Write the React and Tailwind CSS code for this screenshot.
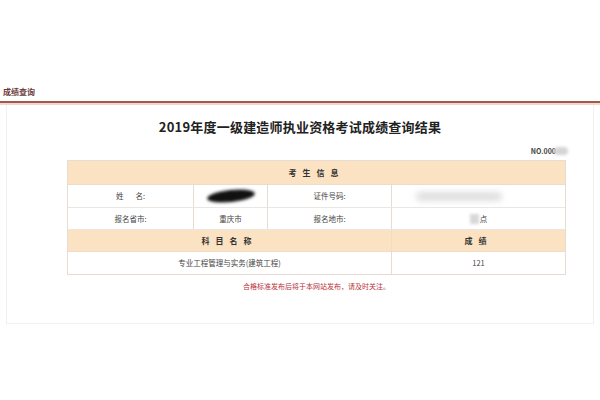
import React from 'react';

const cjk = { fontFamily: '"Noto Sans CJK SC", "Noto Sans", sans-serif' };

const Cell = ({ className = '', children }) => (
  <div className={`flex items-center justify-center border-r border-[#e6dcd2] last:border-r-0 ${className}`}>
    {children}
  </div>
);

export default function App() {
  return (
    <div className="w-[600px] h-[400px] bg-white overflow-hidden text-[#444]" style={cjk}>
      {/* top bar */}
      <div className="h-[82px]" />
      <div className="px-[3px] h-[19px] flex items-center text-[8px] font-bold text-[#6b3a3a]">成绩查询</div>
      <div className="h-[2px] bg-[#a3584e]" />
      <div className="h-[2px] bg-[#f1d6cf]" />

      {/* content box */}
      <div className="mx-[6px] border border-t-0 border-[#f3f1f0] pb-[26px]">
        <div className="h-[31px] flex items-end justify-center">
          <h1 className="text-[13px] font-bold text-[#222] tracking-[0.2px]">2019年度一级建造师执业资格考试成绩查询结果</h1>
        </div>

        <div className="ml-[60px] w-[499px]">
          <div className="h-[24px] flex items-end justify-end pb-[4px]">
            <span className="relative text-[7px] font-bold text-[#444] pr-[10px]">
              NO.000
              <span className="absolute right-[-2px] top-[1px] w-[14px] h-[8px] rounded-full bg-[#d4d4d4] blur-[1.5px]" />
            </span>
          </div>

          <div className="border border-[#e6dcd2] text-[7.5px]">
            <div className="h-[24px] bg-[#fbe2c2] flex items-center justify-center font-bold text-[8px] tracking-[6px] text-[#333] border-b border-[#eedcc8]">
              考生信息
            </div>
            <div className="h-[23px] grid grid-cols-[126px_74px_124px_1fr] border-b border-[#ece6e0]">
              <Cell><span className="mr-[12px]">姓</span>名:</Cell>
              <Cell>
                <span className="w-[48px] h-[12px] rounded-[50%] bg-[#111] blur-[1.5px] -rotate-6" />
              </Cell>
              <Cell>证件号码:</Cell>
              <Cell>
                <span className="w-[86px] h-[9px] ml-[-40px] rounded-full bg-[#dedede] blur-[3px]" />
              </Cell>
            </div>
            <div className="h-[22px] grid grid-cols-[126px_74px_124px_1fr] border-b border-[#ece6e0]">
              <Cell>报名省市:</Cell>
              <Cell>重庆市</Cell>
              <Cell>报名地市:</Cell>
              <Cell>
                <span className="w-[9px] h-[10px] bg-[#d8d8d8] blur-[1.5px] mr-[1px]" />
                <span>点</span>
              </Cell>
            </div>
            <div className="h-[22px] bg-[#fbe2c2] grid grid-cols-[324px_1fr] font-bold text-[8px] text-[#333] border-b border-[#eedcc8]">
              <Cell className="border-[#f1dcc0]"><span className="tracking-[6px]">科目名称</span></Cell>
              <Cell><span className="tracking-[6px]">成绩</span></Cell>
            </div>
            <div className="h-[22px] grid grid-cols-[324px_1fr]">
              <Cell>专业工程管理与实务(建筑工程)</Cell>
              <Cell>121</Cell>
            </div>
          </div>

          <div className="h-[22px] flex items-center justify-center text-[7px] text-[#b8323a]">
            合格标准发布后将于本网站发布，请及时关注。
          </div>
        </div>
      </div>
    </div>
  );
}
